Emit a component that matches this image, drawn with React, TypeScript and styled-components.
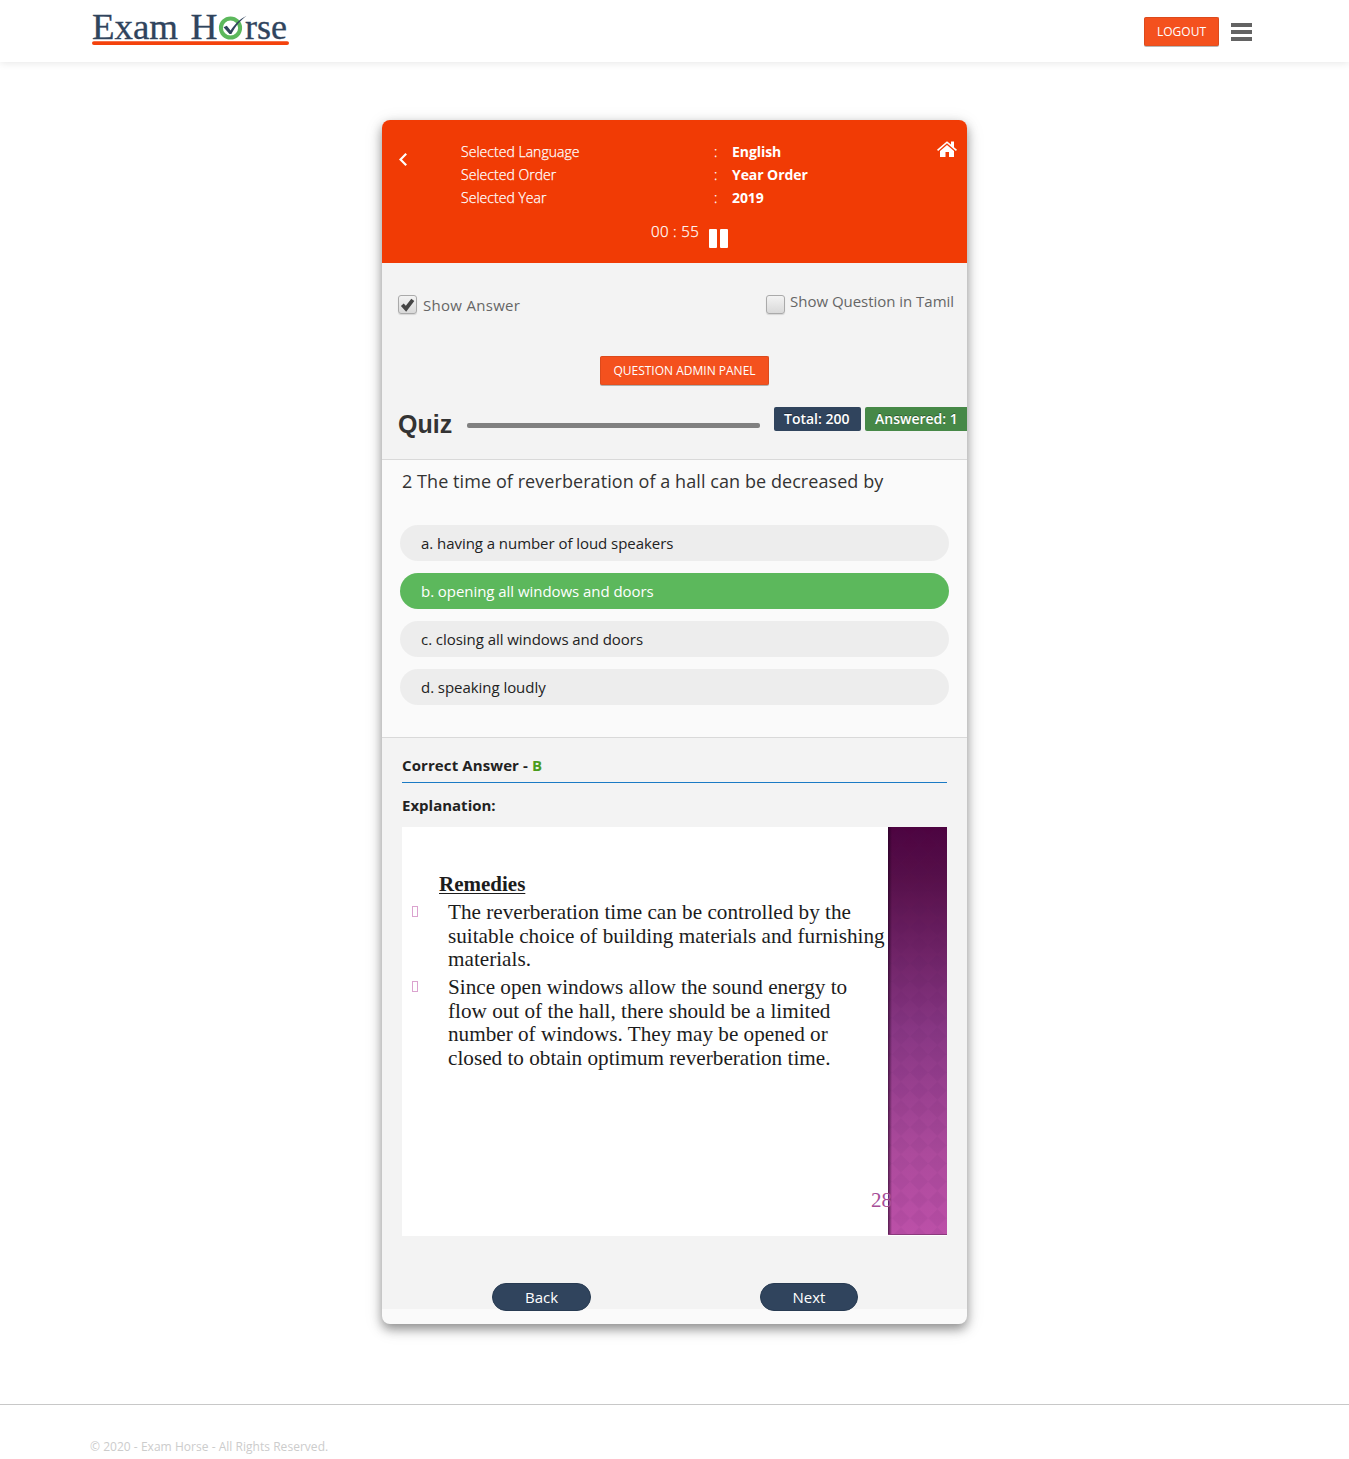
import React, { useState } from "react";
import styled, { createGlobalStyle } from "styled-components";

const GlobalStyle = createGlobalStyle`
  * { box-sizing: border-box; }
  body {
    margin: 0;
    background: #fff;
    color: #222;
    font-family: "Open Sans", sans-serif;
    font-size: 15px;
  }
  button { font-family: inherit; }
`;

const Page = styled.div`
  height: 1459px;
  display: flex;
  flex-direction: column;
  overflow: hidden;
`;

const TopBar = styled.header`
  flex: none;
  height: 62px;
  padding: 0 96px 0 90px;
  display: flex;
  justify-content: space-between;
  align-items: flex-start;
  background: #fff;
  box-shadow: 0 1px 8px rgba(0, 0, 0, 0.1);
`;

const Logo = styled.svg`
  display: block;
  width: 202px;
  height: 50px;
`;

const LogoText = styled.text`
  font-family: "Liberation Serif", serif;
  font-size: 35px;
  fill: #30445d;
  stroke: #30445d;
  stroke-width: 0.3px;
`;

const TopActions = styled.div`
  display: flex;
  align-items: flex-start;
  gap: 12px;
  padding-top: 17px;
`;

const ActionButton = styled.button<{ $width: number }>`
  width: ${(p) => p.$width}px;
  height: 29px;
  padding: 0;
  border: 1px solid #dc4a1c;
  border-bottom-color: #e5501f;
  border-radius: 2px;
  background: #f4511e;
  box-shadow: 0 1px 0 rgba(0, 0, 0, 0.28);
  color: #fff;
  font-size: 12px;
  line-height: 27px;
  white-space: nowrap;
`;

const MenuButton = styled.div`
  width: 22px;
  padding-top: 6px;
  display: flex;
  flex-direction: column;
  gap: 3px;
`;

const MenuBar = styled.span`
  height: 4px;
  width: 21px;
  background: #636363;
`;

const Main = styled.main`
  flex: none;
  height: 1342px;
  padding-top: 58px;
  display: flex;
  justify-content: center;
  align-items: flex-start;
`;

const Card = styled.section`
  width: 585px;
  height: 1204px;
  border-radius: 8px;
  background: #fafafa;
  box-shadow: 0 5px 11px rgba(0, 0, 0, 0.4), 0 4px 20px rgba(0, 0, 0, 0.1);
  display: flex;
  flex-direction: column;
`;

const CardClip = styled.div`
  height: 100%;
  border-radius: 8px;
  overflow: hidden;
`;

const CardHeader = styled.header`
  height: 143px;
  padding-top: 20px;
  background: #f13b05;
  color: #fff;
`;

const HeaderRow = styled.div`
  display: grid;
  grid-template-columns: 79px 1fr 30px;
  height: 69px;
`;

const BackLink = styled.div`
  padding: 13px 0 0 17px;
  svg { display: block; }
`;

const HomeLink = styled.div`
  padding-top: 1px;
  svg { display: block; }
`;

const Selection = styled.dl`
  margin: 0;
  display: grid;
  grid-template-columns: 253px 18px 1fr;
  grid-auto-rows: 23px;
  font-size: 14px;
  line-height: 23px;
`;

const Term = styled.dt`
  font-weight: 300;
  letter-spacing: 0.03px;
  -webkit-text-stroke: 0.25px #fff;
`;

const Value = styled.dd`
  margin: 0;
  font-weight: 700;
  letter-spacing: -0.07px;
`;

const Timer = styled.div`
  display: flex;
  align-items: flex-start;
  padding: 10px 0 0 269px;
  font-size: 15px;
  font-weight: 300;
  line-height: 24px;
  gap: 10px;
`;

const Clock = styled.span`
  width: 48px;
  letter-spacing: 0.35px;
  white-space: nowrap;
  -webkit-text-stroke: 0.25px #fff;
`;

const Pause = styled.div`
  display: flex;
  gap: 3px;
  padding-top: 10px;
`;

const PauseBar = styled.span`
  width: 8px;
  height: 19px;
  border-radius: 1px;
  background: #fff;
`;

const Controls = styled.div`
  height: 197px;
  background: #f3f3f3;
  border-bottom: 1px solid #d9d9d9;
`;

const Toggles = styled.div`
  height: 93px;
  padding: 32px 13px 0 16px;
  display: flex;
  justify-content: space-between;
  align-items: flex-start;
`;

const Toggle = styled.label<{ $gap: number }>`
  display: flex;
  align-items: flex-start;
  gap: ${(p) => p.$gap}px;
  color: #666;
`;

const Box = styled.span`
  width: 19px;
  height: 19px;
  border: 1px solid #aaa;
  border-radius: 3px;
  background: linear-gradient(#f3f3f3, #d9d9d9);
  box-shadow: 0 1px 1px rgba(0, 0, 0, 0.12);
  svg { display: block; }
`;

const ToggleText = styled.span<{ $offset: number; $weight: number; $spacing: number }>`
  margin-top: ${(p) => p.$offset}px;
  line-height: 20px;
  font-weight: ${(p) => p.$weight};
  letter-spacing: ${(p) => p.$spacing}px;
  white-space: nowrap;
`;

const AdminRow = styled.div`
  height: 51px;
  padding-left: 218px;
`;

const QuizRow = styled.div`
  display: grid;
  grid-template-columns: 54px 293px 1fr;
  column-gap: 15px;
  padding-left: 16px;
`;

const QuizTitle = styled.h2`
  margin: 3px 0 0;
  font: bold 25px/28px "Liberation Sans", Arial, sans-serif;
  color: #333;
`;

const Progress = styled.div`
  height: 5px;
  margin-top: 16px;
  border-radius: 2px;
  background: #808080;
`;

const Badges = styled.div`
  display: flex;
  gap: 4px;
  margin-left: -1px;
`;

const Badge = styled.span<{ $color: string; $width: number }>`
  flex: none;
  width: ${(p) => p.$width}px;
  height: 24px;
  padding-left: 10px;
  border-radius: 2px;
  background: ${(p) => p.$color};
  color: #fff;
  font-size: 14px;
  font-weight: 600;
  line-height: 24px;
  text-shadow: 0 -1px 0 rgba(0, 0, 0, 0.35);
  white-space: nowrap;
`;

const QuestionArea = styled.div`
  height: 278px;
  padding: 8px 18px 0;
  background: #fafafa;
  border-bottom: 1px solid #d9d9d9;
`;

const Question = styled.p`
  margin: 0 0 30px;
  padding-left: 2px;
  color: #333;
  font-size: 18px;
  letter-spacing: 0.07px;
  line-height: 27px;
`;

const Options = styled.ul`
  margin: 0;
  padding: 0;
  list-style: none;
  display: grid;
  gap: 12px;
`;

const Option = styled.li<{ $correct: boolean }>`
  height: 36px;
  padding-left: 21px;
  border-radius: 18px;
  background: ${(p) => (p.$correct ? "#5cb85c" : "#ededed")};
  color: ${(p) => (p.$correct ? "#fff" : "#222")};
  font-size: 15px;
  letter-spacing: -0.05px;
  line-height: 36px;
`;

const AnswerArea = styled.div`
  height: 571px;
  padding: 16px 20px 0;
  background: #f3f3f3;
`;

const Correct = styled.div`
  height: 29px;
  border-bottom: 1px solid #1a7ac4;
  font-weight: 700;
  letter-spacing: 0.1px;
  line-height: 22px;
`;

const Letter = styled.span`
  color: #4a9c1c;
`;

const Explanation = styled.div`
  height: 44px;
  padding-top: 11px;
  font-weight: 700;
  line-height: 22px;
`;

const Slide = styled.div`
  position: relative;
  height: 409px;
  display: grid;
  grid-template-columns: 486px 59px;
  background: #fff;
  font-family: "Liberation Serif", "Times New Roman", serif;
  color: #1c1c1c;
`;

const SlideBody = styled.div`
  padding-top: 46px;
`;

const SlideTitle = styled.h3`
  margin: 0 0 5px 37px;
  font-size: 21px;
  line-height: 23.4px;
  text-decoration: underline;
  text-decoration-thickness: 1px;
  text-underline-offset: 2px;
`;

const SlidePoint = styled.div`
  display: grid;
  grid-template-columns: 36px 1fr;
  padding-left: 10px;
  margin-bottom: 4.8px;
  font-size: 21.2px;
  line-height: 23.4px;
  white-space: pre;
`;

const Bullet = styled.span`
  width: 6px;
  height: 11px;
  margin-top: 5px;
  border: 1px solid #dba3cf;
`;

const Stripe = styled.svg`
  display: block;
  width: 59px;
  height: 408px;
`;

const SlideNumber = styled.span`
  position: absolute;
  left: 469px;
  top: 360px;
  width: 20px;
  overflow: hidden;
  color: #a64d97;
  font-size: 21px;
  line-height: 26px;
`;

const Navigation = styled.nav`
  display: flex;
  gap: 169px;
  padding: 47px 0 0 90px;
`;

const NavButton = styled.button<{ $width: number }>`
  position: relative;
  width: ${(p) => p.$width}px;
  height: 28px;
  padding: 0;
  border: 1px solid #283b52;
  border-radius: 14px;
  background: #30445d;
  color: #fff;
  font-size: 15px;
  font-weight: 400;
  line-height: 26px;
`;

const Footer = styled.footer`
  flex: none;
  height: 55px;
  border-top: 1px solid #c8c8c8;
  padding: 32px 0 0 90px;
  color: #ccc;
  font-size: 12px;
  letter-spacing: 0.03px;
  line-height: 20px;
`;

const selections = [
  ["Selected Language", "English"],
  ["Selected Order", "Year Order"],
  ["Selected Year", "2019"],
];

const options = [
  "a. having a number of loud speakers",
  "b. opening all windows and doors",
  "c. closing all windows and doors",
  "d. speaking loudly",
];

const points = [
  "The reverberation time can be controlled by the\nsuitable choice of building materials and furnishing\nmaterials.",
  "Since open windows allow the sound energy to\nflow out of the hall, there should be a limited\nnumber of windows. They may be opened or\nclosed to obtain optimum reverberation time.",
];

function BrandLogo() {
  return (
    <Logo viewBox="0 0 202 50">
      <LogoText x="2" y="38.6" textLength="86" lengthAdjust="spacingAndGlyphs">Exam</LogoText>
      <LogoText x="100.5" y="38.6" textLength="27" lengthAdjust="spacingAndGlyphs">H</LogoText>
      <circle cx="140.5" cy="28" r="9.6" fill="none" stroke="#5cb85c" strokeWidth="4" />
      <path d="M133.5 27.2l3.3-1.5 3.8 4.9c4-6.3 8.400-11 16.1-14.9-6.500 4.700-10.800 10-15.300 18.300h-1.900z" fill="#30445d" />
      <LogoText x="155" y="38.6" textLength="42" lengthAdjust="spacingAndGlyphs">rse</LogoText>
      <rect x="2" y="41.2" width="197" height="3.8" rx="1.9" fill="#f4420c" />
    </Logo>
  );
}

function SlideStripe() {
  return (
    <Stripe viewBox="0 0 59 408">
      <defs>
        <linearGradient id="stripeFill" x1="0" y1="0" x2="0" y2="1">
          <stop offset="0" stopColor="#4d0340" />
          <stop offset="0.12" stopColor="#560f49" />
          <stop offset="0.5" stopColor="#883784" />
          <stop offset="0.8" stopColor="#ac4a9c" />
          <stop offset="1" stopColor="#bc50a8" />
        </linearGradient>
        <linearGradient id="stripeEdge">
          <stop offset="0" stopColor="#200020" stopOpacity="0.65" />
          <stop offset="1" stopColor="#200020" stopOpacity="0" />
        </linearGradient>
        <pattern id="diamonds" width="18.2" height="18.2" patternUnits="userSpaceOnUse" x="22" y="291">
          <path d="M9.1 0L18.2 9.1 9.1 18.2 0 9.1z" fill="#4a1250" fillOpacity="0.06" />
        </pattern>
      </defs>
      <rect width="59" height="408" fill="url(#stripeFill)" />
      <rect width="59" height="408" fill="url(#diamonds)" />
      <rect width="4" height="408" fill="url(#stripeEdge)" />
      <rect width="59" height="1" y="407" fill="#8a3a7c" />
    </Stripe>
  );
}

export default function App() {
  const [showAnswer] = useState(true);
  return (
    <Page>
      <GlobalStyle />
      <TopBar>
        <BrandLogo />
        <TopActions>
          <ActionButton $width={75}>LOGOUT</ActionButton>
          <MenuButton>
            <MenuBar />
            <MenuBar />
            <MenuBar />
          </MenuButton>
        </TopActions>
      </TopBar>
      <Main>
        <Card>
          <CardClip>
            <CardHeader>
              <HeaderRow>
                <BackLink>
                  <svg width="9" height="13" viewBox="0 0 9 13">
                    <path d="M7.2 .8L1.5 6.5l5.7 5.7" fill="none" stroke="#fff" strokeWidth="2.2" />
                  </svg>
                </BackLink>
                <Selection>
                  {selections.map(([name, value]) => (
                    <React.Fragment key={name}>
                      <Term>{name}</Term>
                      <Term>:</Term>
                      <Value>{value}</Value>
                    </React.Fragment>
                  ))}
                </Selection>
                <HomeLink>
                  <svg width="20" height="17" viewBox="0 0 20 17" fill="#fff">
                    <path d="M10 .2l4 3.400V.5h3v5.700l3 2.600-1.100 1.200L10 2.300 1.100 10 0 8.800z" />
                    <path d="M10 4l7 5.900V16h-5v-5H8.500v5H3V9.900z" />
                  </svg>
                </HomeLink>
              </HeaderRow>
              <Timer>
                <Clock>00 : 55</Clock>
                <Pause>
                  <PauseBar />
                  <PauseBar />
                </Pause>
              </Timer>
            </CardHeader>
            <Controls>
              <Toggles>
                <Toggle $gap={6}>
                  <Box>
                    {showAnswer && (
                      <svg width="17" height="17" viewBox="0 0 17 17">
                        <path d="M3.3 8.800l3.700 3.900L13.800 3.800" fill="none" stroke="#444" strokeWidth="3.8" />
                      </svg>
                    )}
                  </Box>
                  <ToggleText $offset={0} $weight={500} $spacing={0.3}>Show Answer</ToggleText>
                </Toggle>
                <Toggle $gap={5}>
                  <Box />
                  <ToggleText $offset={-4} $weight={400} $spacing={-0.03}>Show Question in Tamil</ToggleText>
                </Toggle>
              </Toggles>
              <AdminRow>
                <ActionButton $width={169}>QUESTION ADMIN PANEL</ActionButton>
              </AdminRow>
              <QuizRow>
                <QuizTitle>Quiz</QuizTitle>
                <Progress />
                <Badges>
                  <Badge $color="#30445d" $width={87}>Total: 200</Badge>
                  <Badge $color="#468847" $width={106}>Answered: 1</Badge>
                </Badges>
              </QuizRow>
            </Controls>
            <QuestionArea>
              <Question>2 The time of reverberation of a hall can be decreased by</Question>
              <Options>
                {options.map((text, i) => (
                  <Option key={text} $correct={i === 1}>{text}</Option>
                ))}
              </Options>
            </QuestionArea>
            <AnswerArea>
              <Correct>
                Correct Answer - <Letter>B</Letter>
              </Correct>
              <Explanation>Explanation:</Explanation>
              <Slide>
                <SlideBody>
                  <SlideTitle>Remedies</SlideTitle>
                  {points.map((text) => (
                    <SlidePoint key={text}>
                      <Bullet />
                      <span>{text}</span>
                    </SlidePoint>
                  ))}
                </SlideBody>
                <SlideStripe />
                <SlideNumber>28</SlideNumber>
              </Slide>
              <Navigation>
                <NavButton $width={99}>Back</NavButton>
                <NavButton $width={98}>Next</NavButton>
              </Navigation>
            </AnswerArea>
          </CardClip>
        </Card>
      </Main>
      <Footer>© 2020 - Exam Horse - All Rights Reserved.</Footer>
    </Page>
  );
}
